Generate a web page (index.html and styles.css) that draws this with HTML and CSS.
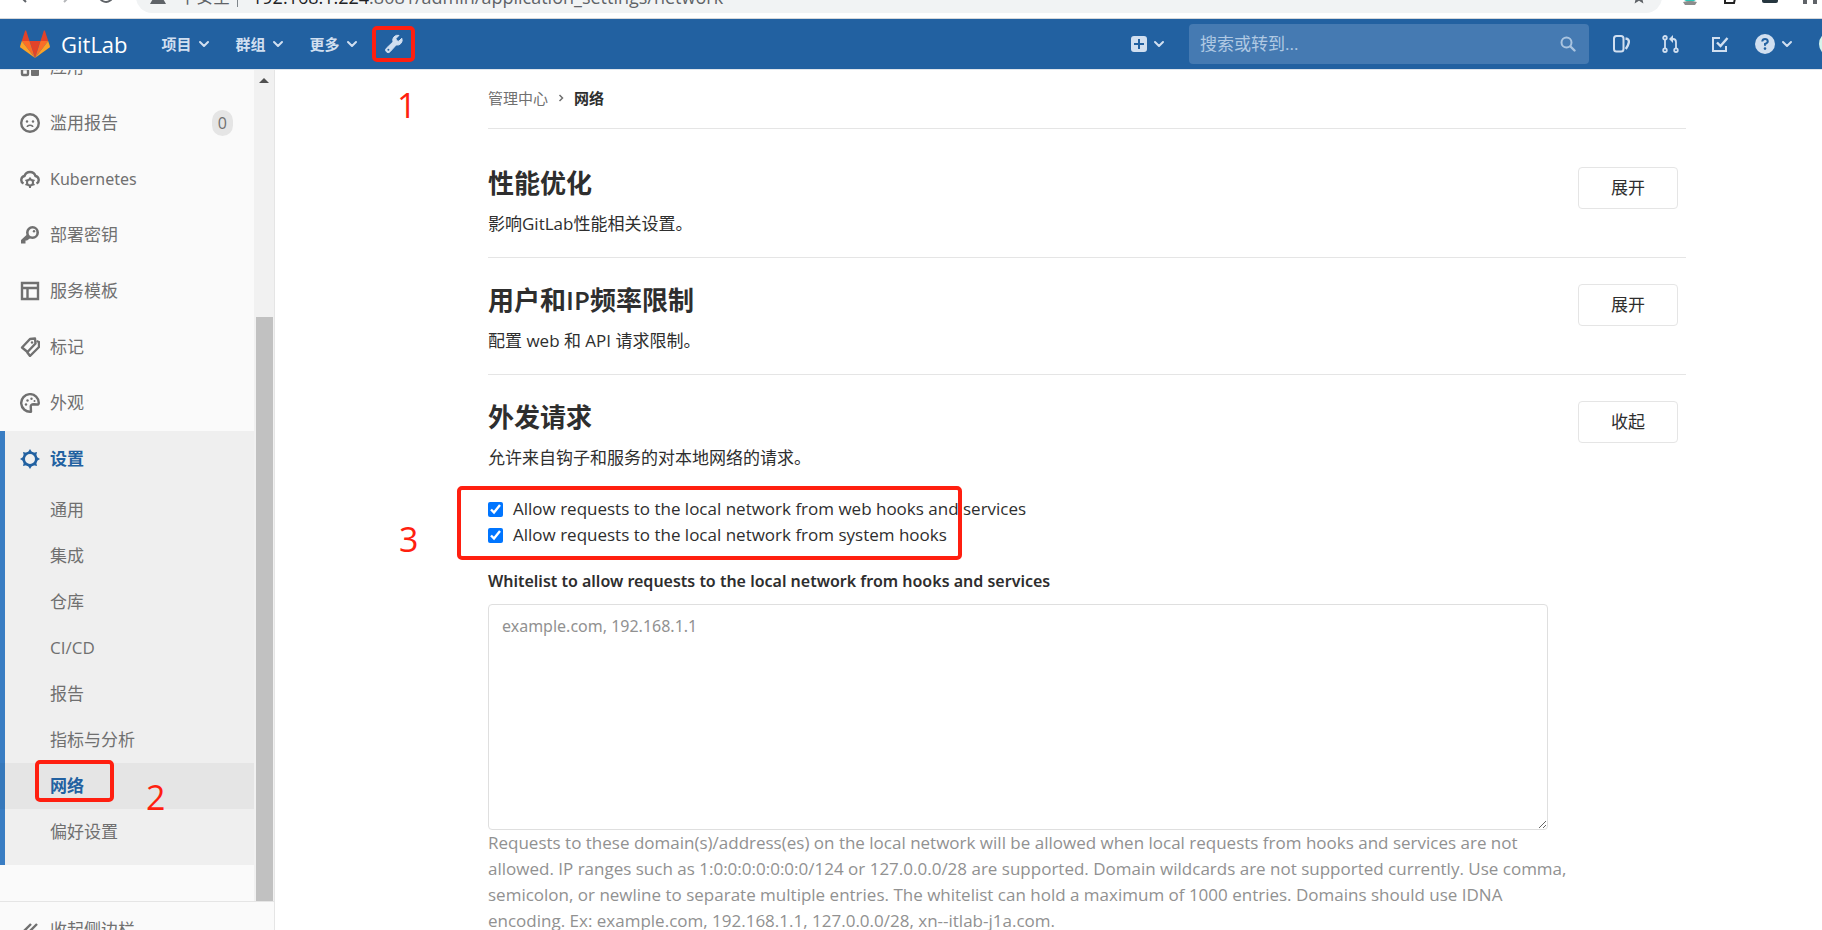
FILE: index.html
```html
<!DOCTYPE html>
<html lang="zh-CN">
<head>
    <meta charset="UTF-8">
    <meta name="viewport" content="width=device-width, initial-scale=1.0">
    <title>网络 · GitLab</title>
    <link rel="stylesheet" href="styles.css">
</head>
<body>
    <!-- shared icons -->
    <svg class="sprite" aria-hidden="true">
        <symbol id="chevron" viewBox="0 0 12 12"><path d="M2 4l4 4 4-4" fill="none" stroke="currentColor" stroke-width="2" stroke-linecap="round" stroke-linejoin="round"/></symbol>
    </svg>

    <div class="browser-bar">
        <svg class="tool back" viewBox="0 0 20 20"><path d="M17 10H4M10 3l-7 7 7 7" fill="none" stroke="currentColor" stroke-width="2"/></svg>
        <svg class="tool forward" viewBox="0 0 20 20"><path d="M3 10h13M10 3l7 7-7 7" fill="none" stroke="currentColor" stroke-width="2"/></svg>
        <svg class="tool reload" viewBox="0 0 20 20"><path d="M17 10a7 7 0 1 1-2-5l2 2M17 2v5h-5" fill="none" stroke="currentColor" stroke-width="2"/></svg>
        <div class="address">
            <svg class="warn" viewBox="0 0 16 16"><path d="M8 1l8 14H0z" fill="currentColor"/></svg>
            <span class="insecure">不安全</span>
            <span class="bar"></span>
            <span class="url"><b>192.168.1.224</b>:8081/admin/application_settings/network</span>
            <svg class="star" viewBox="0 0 16 16"><path d="M8 0l2.300 5.300 5.700.5-4.300 3.800L13 15.500 8 12.400l-5 3.100 1.300-5.900L0 5.800l5.700-.5z" fill="currentColor"/></svg>
        </div>
        <div class="extensions">
            <svg viewBox="0 0 16 16"><path d="M1 0h14v10q-3 3-7 3T1 10z" fill="#2bc9b9"/><path d="M1 13q7-2 14 0l-2 3H3z" fill="#8c8c8c"/></svg>
            <svg viewBox="0 0 16 16"><path d="M3 0v14h9l2-9" fill="none" stroke="#222" stroke-width="2"/></svg>
            <svg viewBox="0 0 16 16"><rect y="0" width="16" height="14" rx="2" fill="#263640"/></svg>
            <svg viewBox="0 0 16 16"><path d="M1 6h14v9h-4v-4H5v4H1z" fill="#5f6368"/></svg>
        </div>
    </div>

    <header class="navbar">
        <a class="brand" href="#">
            <svg viewBox="0 0 30 28">
                <path d="M15 28l5.500-17h-11z" fill="#e24329"/>
                <path d="M15 28L9.500 11H1.800z" fill="#fc6d26"/>
                <path d="M1.800 11L.1 16.200a1.200 1.200 0 0 0 .4 1.300L15 28z" fill="#fca326"/>
                <path d="M1.800 11h7.700L6.200.8c-.2-.5-.9-.5-1.100 0z" fill="#e24329"/>
                <path d="M15 28l5.500-17h7.700z" fill="#fc6d26"/>
                <path d="M28.200 11l1.700 5.200a1.200 1.200 0 0 1-.4 1.300L15 28z" fill="#fca326"/>
                <path d="M28.200 11h-7.700L23.800.8c.2-.5.9-.5 1.100 0z" fill="#e24329"/>
            </svg>
            <span>GitLab</span>
        </a>
        <nav class="menu">
            <button>项目<svg class="chev"><use href="#chevron"/></svg></button>
            <button>群组<svg class="chev"><use href="#chevron"/></svg></button>
            <button>更多<svg class="chev"><use href="#chevron"/></svg></button>
            <a class="wrench" href="#" aria-label="管理中心">
                <svg viewBox="0 0 20 20"><path d="M17.800 4.200l-3 3-2.300-.5-.5-2.300 3-3a5 5 0 0 0-6 6.500l-6.600 6.300a2.500 2.500 0 1 0 3.600 3.600L12.200 11a5 5 0 0 0 5.600-6.800z" fill="currentColor" stroke="currentColor" stroke-linejoin="round"/><circle cx="4.400" cy="15.800" r="1" fill="#2261a1"/></svg>
            </a>
        </nav>
        <div class="nav-right">
            <button class="plus" aria-label="新建">
                <svg class="i16" viewBox="0 0 16 16"><rect width="16" height="16" rx="3" fill="currentColor"/><path d="M8 3v10M3 8h10" stroke="#2261a1" stroke-width="2"/></svg>
                <svg class="chev"><use href="#chevron"/></svg>
            </button>
            <form class="search">
                <input type="text" placeholder="搜索或转到..." aria-label="搜索或转到">
                <svg class="i16" viewBox="0 0 16 16"><circle cx="6.500" cy="6.500" r="5" fill="none" stroke="currentColor" stroke-width="2"/><path d="M10.500 10.500l4 4" stroke="currentColor" stroke-width="2.400" stroke-linecap="round"/></svg>
            </form>
            <a class="nav-icon" href="#" aria-label="议题"><svg viewBox="0 0 18 18"><rect x="1" y="1" width="9.500" height="15.500" rx="2.500" fill="none" stroke="currentColor" stroke-width="2"/><path d="M12.500 3.500q4 .5 3.300 4t-3 6.500" fill="none" stroke="currentColor" stroke-width="2.400"/></svg></a>
            <a class="nav-icon" href="#" aria-label="合并请求"><svg viewBox="0 0 18 18"><g fill="none" stroke="currentColor" stroke-width="1.800"><circle cx="3" cy="2.800" r="1.800"/><circle cx="3" cy="15.200" r="1.800"/><circle cx="14" cy="15.200" r="1.800"/><path d="M3 5v8M14 13V7q0-3-3-3H9"/></g><path d="M11 0v8L7 4z" fill="currentColor"/></svg></a>
            <a class="nav-icon" href="#" aria-label="待办事项"><svg viewBox="0 0 18 18"><path d="M9 3H2v13h13v-5" fill="none" stroke="currentColor" stroke-width="2"/><path d="M6 7.500l3.500 3.500L16.500 3" fill="none" stroke="currentColor" stroke-width="2.400"/></svg></a>
            <button class="help" aria-label="帮助">
                <svg viewBox="0 0 20 20"><circle cx="10" cy="10" r="10" fill="currentColor"/><path d="M7.200 7.500Q7.500 5 10 5t2.800 2.300Q12.800 9 10 10v1.800" fill="none" stroke="#2261a1" stroke-width="2"/><circle cx="10" cy="14.600" r="1.300" fill="#2261a1"/></svg>
                <svg class="chev"><use href="#chevron"/></svg>
            </button>
            <span class="avatar"></span>
        </div>
    </header>

    <div class="layout">
        <aside class="sidebar">
            <div class="scroller">
                <ul class="items">
                    <li><a href="#"><svg viewBox="0 0 20 20"><g fill="none" stroke="currentColor" stroke-width="2.400"><rect x="2" y="2" width="6" height="6"/><rect x="12" y="2" width="6" height="6"/><rect x="2" y="12" width="6" height="6" rx="1"/></g><rect x="11" y="11" width="8" height="8" rx="1" fill="currentColor"/></svg>应用</a></li>
                    <li><a href="#"><svg viewBox="0 0 20 20"><circle cx="10" cy="10" r="8.800" fill="none" stroke="currentColor" stroke-width="2.400"/><circle cx="7" cy="8.500" r="1.200" fill="currentColor"/><circle cx="13" cy="8.500" r="1.200" fill="currentColor"/><path d="M7.300 14q0-1.800 2.700-1.800t2.700 1.800" fill="none" stroke="currentColor" stroke-width="1.600"/></svg>滥用报告<span class="badge">0</span></a></li>
                    <li><a href="#"><svg viewBox="0 0 20 20"><path d="M3.500 14.500A4 4 0 0 1 4.500 7a5.800 5.800 0 0 1 11 0 4 4 0 0 1 1 7.500" fill="none" stroke="currentColor" stroke-width="2.400"/><circle cx="10" cy="13.500" r="3" fill="none" stroke="currentColor" stroke-width="2"/><path d="M10 8.500v2M10 16.500v2.500M5.500 11l1.800 1M12.700 15l1.800 1M5.500 16l1.800-1M12.700 12l1.800-1" stroke="currentColor" stroke-width="2"/></svg><span class="latin">Kubernetes</span></a></li>
                    <li><a href="#"><svg viewBox="0 0 20 20"><circle cx="12.500" cy="7.500" r="5.200" fill="none" stroke="currentColor" stroke-width="2.600"/><circle cx="14" cy="6.200" r="1.200" fill="currentColor"/><path d="M7 9.500l3.500 3.500-3.500 2.500H5.500V18.500H1v-3.500z" fill="currentColor"/></svg>部署密钥</a></li>
                    <li><a href="#"><svg viewBox="0 0 20 20"><path d="M2 2h16v16H2zM2 7h16M7.500 7v11" fill="none" stroke="currentColor" stroke-width="2.400"/></svg>服务模板</a></li>
                    <li><a href="#"><svg viewBox="0 0 20 20"><g fill="none" stroke="currentColor" stroke-width="2.400" stroke-linejoin="round"><path d="M2 10.500L10 2l5-.5.5 5L7.500 15z"/><path d="M16.500 4l2.500 1v5l-9 9-3-4"/></g><circle cx="12" cy="5.500" r="1.200" fill="currentColor"/></svg>标记</a></li>
                    <li><a href="#"><svg viewBox="0 0 20 20"><path d="M11 18.700A8.800 8.800 0 1 1 18.800 10q0 1.800-2 1.500l-3-.3q-3.500 0-3 3.200z" fill="none" stroke="currentColor" stroke-width="2.400" stroke-linejoin="round"/><g fill="currentColor"><circle cx="11.500" cy="5.800" r="1.200"/><circle cx="7.500" cy="7.500" r="1.200"/><circle cx="6" cy="11.500" r="1.200"/><circle cx="14.500" cy="8" r="1"/></g></svg>外观</a></li>
                    <li class="active">
                        <a href="#"><svg viewBox="0 0 20 20"><circle cx="10" cy="10" r="6.300" fill="none" stroke="currentColor" stroke-width="2.600"/><path d="M10 0l2.500 4h-5zM10 20l2.500-4h-5zM0 10l4-2.500v5zM20 10l-4-2.500v5zM3 3l4.500 1L4 7.500zM17 3l-4.500 1L16 7.500zM3 17l4.500-1L4 12.500zM17 17l-4.500-1 3.500-3.500z" fill="currentColor"/></svg>设置</a>
                        <ul class="sub">
                            <li><a href="#">通用</a></li>
                            <li><a href="#">集成</a></li>
                            <li><a href="#">仓库</a></li>
                            <li><a href="#">CI/CD</a></li>
                            <li><a href="#">报告</a></li>
                            <li><a href="#">指标与分析</a></li>
                            <li class="current"><a href="#">网络</a></li>
                            <li><a href="#">偏好设置</a></li>
                        </ul>
                    </li>
                </ul>
                <div class="scrollbar"><span class="up"></span><span class="thumb"></span></div>
            </div>
            <button class="collapse"><svg viewBox="0 0 20 20"><path d="M11 4l-6 6 6 6M17 4l-6 6 6 6" fill="none" stroke="currentColor" stroke-width="2.400"/></svg>收起侧边栏</button>
        </aside>

        <main class="content">
            <div class="breadcrumbs">
                <a href="#">管理中心</a>
                <svg viewBox="0 0 8 8"><path d="M2.500 1l3 3-3 3" fill="none" stroke="currentColor" stroke-width="1.500"/></svg>
                <strong>网络</strong>
            </div>

            <section class="settings">
                <div class="head">
                    <div>
                        <h4>性能优化</h4>
                        <p>影响GitLab性能相关设置。</p>
                    </div>
                    <button class="btn">展开</button>
                </div>
            </section>

            <section class="settings">
                <div class="head">
                    <div>
                        <h4>用户和<span class="ip">IP</span>频率限制</h4>
                        <p>配置 web 和 API 请求限制。</p>
                    </div>
                    <button class="btn">展开</button>
                </div>
            </section>

            <section class="settings">
                <div class="head">
                    <div>
                        <h4>外发请求</h4>
                        <p>允许来自钩子和服务的对本地网络的请求。</p>
                    </div>
                    <button class="btn">收起</button>
                </div>
                <form class="outbound">
                    <div class="check">
                        <input type="checkbox" id="web-hooks" checked>
                        <label for="web-hooks">Allow requests to the local network from web hooks and services</label>
                    </div>
                    <div class="check">
                        <input type="checkbox" id="system-hooks" checked>
                        <label for="system-hooks">Allow requests to the local network from system hooks</label>
                    </div>
                    <label class="title latin" for="whitelist">Whitelist to allow requests to the local network from hooks and services</label>
                    <textarea id="whitelist" class="latin" placeholder="example.com, 192.168.1.1"></textarea>
                    <p class="hint">Requests to these domain(s)/address(es) on the local network will be allowed when local requests from hooks and services are not allowed. IP ranges such as 1:0:0:0:0:0:0:0/124 or 127.0.0.0/28 are supported. Domain wildcards are not supported currently. Use comma, semicolon, or newline to separate multiple entries. The whitelist can hold a maximum of 1000 entries. Domains should use IDNA encoding. Ex: example.com, 192.168.1.1, 127.0.0.0/28, xn--itlab-j1a.com.</p>
                </form>
            </section>
        </main>
    </div>

    <!-- step markers -->
    <div class="mark mark-1"></div>
    <span class="step step-1">1</span>
    <div class="mark mark-2"></div>
    <span class="step step-2">2</span>
    <div class="mark mark-3"></div>
    <span class="step step-3">3</span>
</body>
</html>
```
FILE: styles.css
```css
* {
    box-sizing: border-box;
}
body {
    position: relative;
    margin: 0;
    height: 100vh;
    overflow: hidden;
    background: #fff;
    color: #2e2e2e;
    font-family: "Open Sans", "Noto Sans CJK SC", sans-serif;
    font-size: 17px;
    line-height: 26px;
}
a {
    color: inherit;
    text-decoration: none;
}
button,
input,
textarea {
    font: inherit;
    color: inherit;
}
button {
    padding: 0;
    border: none;
    background: none;
    cursor: pointer;
}
ul,
h4,
p {
    margin: 0;
    padding: 0;
    list-style: none;
}
svg {
    flex: none;
    display: block;
}
.sprite {
    position: absolute;
    width: 0;
    height: 0;
}
.latin {
    font-family: "Noto Sans", sans-serif;
    font-size: 16px;
}

/* browser toolbar */
.browser-bar {
    display: flex;
    align-items: flex-end;
    height: 19px;
    padding: 0 0 5px 16px;
    overflow: hidden;
    border-bottom: 1px solid #d5d7da;
    color: #5f6368;
}
.tool {
    width: 20px;
    height: 20px;
    margin: 0 22px 8px 0;
}
.forward {
    color: #b4b6b9;
    margin-left: -4px;
}
.reload {
    margin-right: 20px;
}
.address {
    display: flex;
    flex: 1;
    align-items: center;
    height: 32px;
    padding: 0 16px 0 14px;
    border-radius: 16px;
    background: #f1f3f4;
}
.warn {
    width: 16px;
    height: 16px;
    margin-right: 13px;
}
.bar {
    width: 1px;
    height: 20px;
    margin: 0 14px 0 7px;
    background: #80868b;
}
.url {
    font-size: 18px;
}
.url b {
    color: #202124;
    font-weight: 400;
}
.star {
    width: 14px;
    height: 16px;
    margin-left: auto;
}
.extensions {
    display: flex;
    gap: 24px;
    margin: 0 4px 8px 20px;
}
.extensions svg {
    width: 16px;
    height: 16px;
}

/* top navigation */
.navbar {
    display: flex;
    align-items: center;
    height: 51px;
    padding-left: 20px;
    overflow: hidden;
    border-bottom: 1px solid #dfe5ec;
    background: #2261a1;
    color: #d1dff0;
}
.brand {
    display: flex;
    align-items: center;
    gap: 11px;
    color: #fff;
    font-size: 22px;
}
.brand svg {
    width: 30px;
    height: 28px;
}
.menu {
    display: flex;
    align-items: center;
    gap: 26px;
    margin-left: 34px;
}
.menu button,
.plus,
.help {
    display: flex;
    align-items: center;
    gap: 6px;
    font-size: 15px;
    font-weight: 700;
}
.chev {
    width: 12px;
    height: 12px;
}
.wrench svg,
.help svg:first-child {
    width: 20px;
    height: 20px;
}
.i16 {
    width: 16px;
    height: 16px;
}
.nav-right {
    display: flex;
    align-items: center;
    margin-left: auto;
}
.search {
    display: flex;
    align-items: center;
    width: 400px;
    height: 40px;
    margin: 0 24px 0 24px;
    padding: 0 13px 0 11px;
    border-radius: 4px;
    background: #457ab2;
    color: #a9c4e0;
}
.search input {
    flex: 1;
    min-width: 0;
    padding: 0;
    border: none;
    outline: none;
    background: none;
}
.search input::placeholder {
    color: #b0c9e3;
}
.nav-icon {
    margin-right: 31px;
}
.nav-icon svg {
    width: 18px;
    height: 18px;
}
.help {
    margin-left: -5px;
}
.avatar {
    width: 26px;
    height: 26px;
    margin: 0 -23px 0 26px;
    border-radius: 50%;
    background: #d5f5ec;
}

/* sidebar */
.layout {
    display: flex;
    align-items: flex-start;
}
.sidebar {
    display: flex;
    flex: none;
    flex-direction: column;
    width: 275px;
    height: calc(100vh - 42px);
    border-right: 1px solid #e5e5e5;
    background: #fafafa;
    color: #707070;
}
.scroller {
    display: flex;
    flex: 1;
    min-height: 0;
    overflow: hidden;
}
/* scrolled to the end */
.items {
    display: flex;
    flex: 1;
    flex-direction: column;
    justify-content: flex-end;
    padding-bottom: 36px;
}
.items > li {
    flex: none;
}
.items > li > a {
    display: flex;
    align-items: center;
    gap: 10px;
    height: 56px;
    padding: 0 21px 0 20px;
}
.items svg,
.collapse svg {
    width: 20px;
    height: 20px;
}
.badge {
    margin-left: auto;
    padding: 0 6px;
    border-radius: 13px;
    background: #e5e5e5;
    font-size: 16px;
}
.active {
    padding-bottom: 10px;
    background: #efefef;
    box-shadow: inset 5px 0 #397dc3;
}
.active > a {
    color: #2261a1;
    font-weight: 700;
}
.sub a {
    display: flex;
    align-items: center;
    height: 46px;
    padding-left: 50px;
}
.sub .current {
    background: rgba(0, 0, 0, 0.04);
    color: #2261a1;
    font-weight: 700;
}
.scrollbar {
    display: flex;
    flex-direction: column;
    align-items: center;
    width: 20px;
    padding-top: 8px;
    background: #f1f1f1;
}
.up {
    border: 5px solid transparent;
    border-top: none;
    border-bottom-color: #505050;
}
.thumb {
    width: 17px;
    height: 584px;
    margin-top: auto;
    background: #c1c1c1;
}
.collapse {
    display: flex;
    flex: none;
    align-items: center;
    gap: 10px;
    height: 57px;
    padding-left: 20px;
    border-top: 1px solid #e5e5e5;
}

/* page content */
.content {
    flex: 1;
    min-width: 0;
    padding: 0 136px 0 213px;
}
.breadcrumbs {
    display: flex;
    align-items: center;
    gap: 9px;
    height: 59px;
    margin-bottom: 12px;
    padding-bottom: 2px;
    border-bottom: 1px solid #e5e5e5;
    color: #707070;
    font-size: 15px;
}
.breadcrumbs svg {
    width: 8px;
    height: 8px;
}
.breadcrumbs strong {
    color: #2e2e2e;
}
.settings + .settings {
    border-top: 1px solid #e5e5e5;
}
.head {
    display: flex;
    align-items: flex-start;
    justify-content: space-between;
    height: 116px;
    padding: 26px 8px 0 0;
}
.head h4 {
    margin-bottom: 12px;
    font-size: 26px;
    line-height: 32px;
}
.ip {
    font-weight: 600;
}
.btn {
    width: 100px;
    height: 42px;
    border: 1px solid #e5e5e5;
    border-radius: 4px;
    background: #fff;
}
.outbound {
    margin-top: 5px;
}
.check {
    display: flex;
    align-items: center;
    gap: 10px;
}
.check input {
    width: 15px;
    height: 15px;
    margin: 0;
    accent-color: #0075ff;
}
.title {
    display: block;
    margin: 20px 0 10px;
    font-weight: 600;
}
textarea {
    display: block;
    width: 1060px;
    max-width: 100%;
    height: 226px;
    padding: 8px 13px;
    border: 1px solid #dfdfdf;
    border-radius: 4px;
    resize: both;
}
textarea::placeholder {
    color: #919191;
}
.hint {
    max-width: 1080px;
    color: #919191;
}

/* red step markers over the page */
.mark {
    position: absolute;
    border: 4px solid #ff1f10;
    border-radius: 5px;
}
.mark-1 {
    left: 372px;
    top: 26px;
    width: 43px;
    height: 36px;
}
.mark-2 {
    left: 35px;
    top: 760px;
    width: 79px;
    height: 42px;
}
.mark-3 {
    left: 457px;
    top: 486px;
    width: 505px;
    height: 74px;
}
.step {
    position: absolute;
    color: #ff1f10;
    font-size: 34px;
    line-height: 40px;
}
.step-1 {
    left: 397px;
    top: 85px;
}
.step-2 {
    left: 146px;
    top: 777px;
}
.step-3 {
    left: 399px;
    top: 519px;
}
```
